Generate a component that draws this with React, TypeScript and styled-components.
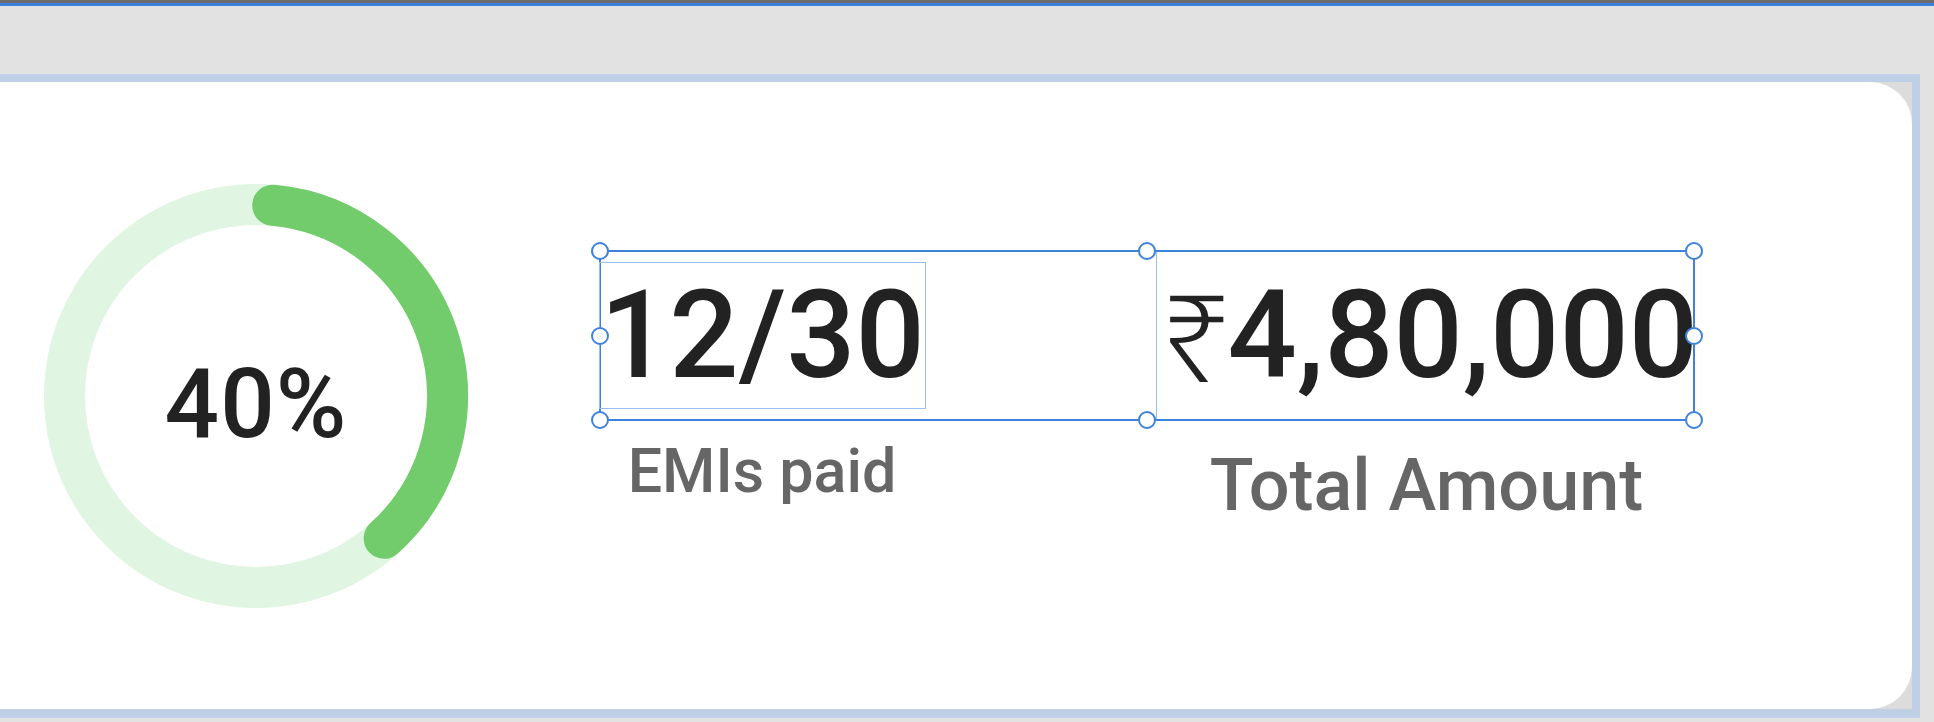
import React from "react";
import styled, { createGlobalStyle } from "styled-components";

const GlobalStyle = createGlobalStyle`
  html, body {
    margin: 0;
    padding: 0;
    background: #e2e2e2;
    overflow: hidden;
  }
  body {
    font-family: Roboto, "Noto Sans", "Liberation Sans", sans-serif;
  }
`;

const Page = styled.div`
  width: 1934px;
  height: 722px;
  display: flex;
  flex-direction: column;
  background: #e2e2e2;
  overflow: hidden;
`;

const TopBar = styled.div`
  flex: none;
  height: 3px;
  background: #6b6b6b;
  border-bottom: 3px solid #3d7fdc;
`;

const Stage = styled.div`
  padding-top: 68px;
`;

const Frame = styled.div`
  box-sizing: border-box;
  margin-left: -8px;
  width: 1928px;
  height: 644px;
  border: 8px solid #bfd0e6;
  border-bottom-width: 9px;
  background: #dcdcdc;
`;

const Card = styled.div`
  box-sizing: border-box;
  height: 100%;
  background: #ffffff;
  border-radius: 0 42px 42px 0;
  display: flex;
  align-items: flex-start;
  padding-left: 44px;
`;

const Donut = styled.div`
  margin-top: 102px;
  width: 424px;
  height: 424px;
  display: grid;
  place-items: center;
  & > * {
    grid-area: 1 / 1;
  }
`;

const Percent = styled.div`
  font-size: 96px;
  font-weight: 500;
  color: #222222;
  line-height: 1;
  padding-top: 15px;
  letter-spacing: 1px;
`;

const Stats = styled.div`
  margin-left: 131px;
  margin-top: 168px;
  display: flex;
  flex-direction: column;
`;

const Group = styled.div`
  position: relative;
  box-sizing: border-box;
  width: 1096px;
  height: 171px;
  border: 2px solid #3f82dc;
  display: flex;
  justify-content: space-between;
  align-items: center;
`;

const ValueBox = styled.div<{ $full?: boolean }>`
  box-sizing: border-box;
  height: ${(p) => (p.$full ? "100%" : "147px")};
  width: ${(p) => (p.$full ? "537px" : "auto")};
  margin-left: ${(p) => (p.$full ? "0" : "-2px")};
  border: ${(p) => (p.$full ? "none" : "1.5px solid #98bfee")};
  border-left: 1.5px solid #98bfee;
  padding-left: ${(p) => (p.$full ? "5px" : "0")};
  display: flex;
  align-items: center;
  font-size: 122px;
  font-weight: 500;
  color: #222222;
  line-height: 1;
  white-space: nowrap;
`;

const Currency = styled.span`
  font-family: "Noto Sans", "DejaVu Sans", sans-serif;
  font-weight: 300;
  font-size: 120px;
  margin-right: -3px;
`;

const Handle = styled.span<{ $x: string; $y: string }>`
  position: absolute;
  left: ${(p) => p.$x};
  top: ${(p) => p.$y};
  width: 14px;
  height: 14px;
  border-radius: 50%;
  background: #ffffff;
  border: 2px solid #3f82dc;
  transform: translate(-50%, -50%);
`;

const LabelRow = styled.div`
  display: grid;
  grid-template-columns: 326px 1fr 537px;
  width: 1096px;
  align-items: start;
`;

const Label = styled.div<{ $size: number; $top: number; $col: number }>`
  grid-column: ${(p) => p.$col};
  margin-top: ${(p) => p.$top}px;
  font-size: ${(p) => p.$size}px;
  font-weight: 500;
  color: #666666;
  line-height: 1;
  text-align: center;
  white-space: nowrap;
`;

const handles: Array<[string, string]> = [
  ["-1px", "-1px"],
  ["50%", "-1px"],
  ["calc(100% + 1px)", "-1px"],
  ["-1px", "50%"],
  ["calc(100% + 1px)", "50%"],
  ["-1px", "calc(100% + 1px)"],
  ["50%", "calc(100% + 1px)"],
  ["calc(100% + 1px)", "calc(100% + 1px)"],
];

function Ring() {
  const c = 212;
  const r = 191.5;
  const a0 = (5 * Math.PI) / 180;
  const a1 = (138 * Math.PI) / 180;
  const x0 = c + r * Math.sin(a0);
  const y0 = c - r * Math.cos(a0);
  const x1 = c + r * Math.sin(a1);
  const y1 = c - r * Math.cos(a1);
  return (
    <svg width="424" height="424" viewBox="0 0 424 424">
      <circle cx={c} cy={c} r={r} fill="none" stroke="#e0f5e2" strokeWidth="41" />
      <path
        d={`M ${x0} ${y0} A ${r} ${r} 0 0 1 ${x1} ${y1}`}
        fill="none"
        stroke="#73cc6c"
        strokeWidth="41"
        strokeLinecap="round"
      />
    </svg>
  );
}

export default function App() {
  return (
    <>
      <GlobalStyle />
      <Page>
        <TopBar />
        <Stage>
          <Frame>
            <Card>
              <Donut>
                <Ring />
                <Percent>40%</Percent>
              </Donut>
              <Stats>
                <Group>
                  <ValueBox>12/30</ValueBox>
                  <ValueBox $full>
                    <Currency>₹</Currency>4,80,000
                  </ValueBox>
                  {handles.map(([x, y], i) => (
                    <Handle key={i} $x={x} $y={y} />
                  ))}
                </Group>
                <LabelRow>
                  <Label $col={1} $size={61} $top={20}>
                    EMIs paid
                  </Label>
                  <Label $col={3} $size={72} $top={29}>
                    Total Amount
                  </Label>
                </LabelRow>
              </Stats>
            </Card>
          </Frame>
        </Stage>
      </Page>
    </>
  );
}
